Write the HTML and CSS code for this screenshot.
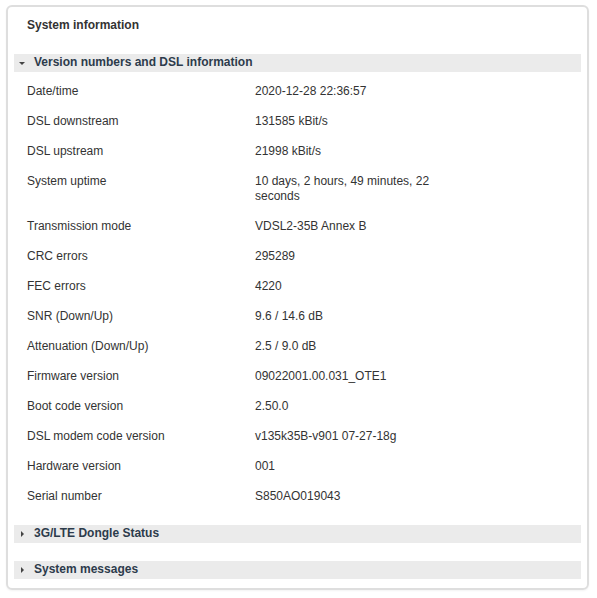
FILE: index.html
```html
<!DOCTYPE html>
<html lang="en">
<head>
    <meta charset="UTF-8">
    <title>System information</title>
    <link rel="stylesheet" href="styles.css">
</head>
<body>
    <div class="panel">
        <h2 class="panel-title">System information</h2>

        <div class="section open">
            <div class="section-head"><span class="arrow"></span>Version numbers and DSL information</div>
            <table class="info">
                <tr><td>Date/time</td><td>2020-12-28 22:36:57</td></tr>
                <tr><td>DSL downstream</td><td>131585 kBit/s</td></tr>
                <tr><td>DSL upstream</td><td>21998 kBit/s</td></tr>
                <tr><td>System uptime</td><td>10 days, 2 hours, 49 minutes, 22 seconds</td></tr>
                <tr><td>Transmission mode</td><td>VDSL2-35B Annex B</td></tr>
                <tr><td>CRC errors</td><td>295289</td></tr>
                <tr><td>FEC errors</td><td>4220</td></tr>
                <tr><td>SNR (Down/Up)</td><td>9.6 / 14.6 dB</td></tr>
                <tr><td>Attenuation (Down/Up)</td><td>2.5 / 9.0 dB</td></tr>
                <tr><td>Firmware version</td><td>09022001.00.031_OTE1</td></tr>
                <tr><td>Boot code version</td><td>2.50.0</td></tr>
                <tr><td>DSL modem code version</td><td>v135k35B-v901 07-27-18g</td></tr>
                <tr><td>Hardware version</td><td>001</td></tr>
                <tr><td>Serial number</td><td>S850AO019043</td></tr>
            </table>
        </div>

        <div class="section">
            <div class="section-head"><span class="arrow"></span>3G/LTE Dongle Status</div>
        </div>

        <div class="section">
            <div class="section-head"><span class="arrow"></span>System messages</div>
        </div>
    </div>
</body>
</html>
```

FILE: styles.css
```css
body {
    margin: 0;
    padding: 5px 8px 8px 6px;
    font-family: 'Liberation Sans', Arial, sans-serif;
    font-size: 12px;
    color: #333;
    background: #fff;
}

.panel {
    border: 2px solid #dedede;
    border-radius: 6px;
    padding: 0 6px 9px 6px;
    width: 567px;
    box-shadow: 0 1px 2px rgba(0, 0, 0, 0.05);
}

.panel-title {
    margin: 0;
    padding: 11px 0 0 13px;
    height: 47px;
    box-sizing: border-box;
    font-size: 12px;
    font-weight: bold;
    color: #333;
}

.section {
    margin-top: 18px;
}

.section:first-of-type {
    margin-top: 0;
}

.open + .section {
    margin-top: 14px;
}

.section-head {
    height: 18px;
    line-height: 16px;
    background-color: #ebebeb;
    font-size: 12px;
    font-weight: bold;
    color: #2d3b4b;
    padding-left: 20px;
    position: relative;
}

.arrow {
    position: absolute;
    left: 5px;
    top: 8px;
    width: 0;
    height: 0;
    border-left: 3px solid transparent;
    border-right: 3px solid transparent;
    border-top: 3px solid #444;
}

.section:not(.open) .arrow {
    left: 7px;
    top: 6px;
    border-top: 3px solid transparent;
    border-bottom: 3px solid transparent;
    border-left: 3px solid #444;
    border-right: none;
}

.info {
    border-collapse: collapse;
    margin: 4px 0 0 0;
}

.info td {
    padding: 7.5px 0;
    line-height: 15px;
    vertical-align: top;
}

.info td:first-child {
    width: 228px;
    padding-left: 13px;
}

.info td:last-child {
    width: 200px;
}
```
